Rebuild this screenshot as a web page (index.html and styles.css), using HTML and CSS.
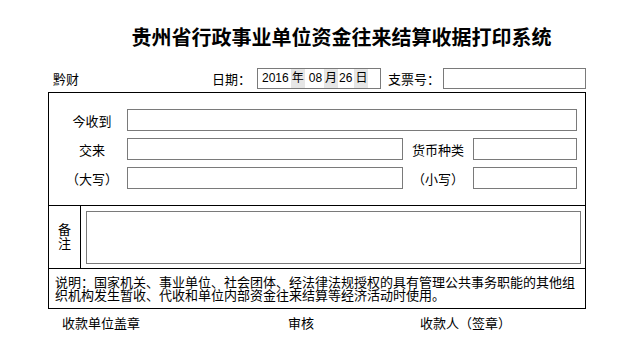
FILE: index.html
```html
<!DOCTYPE html>
<html lang="zh-CN">
<head>
    <meta charset="UTF-8">
    <title>贵州省行政事业单位资金往来结算收据打印系统</title>
    <link rel="stylesheet" href="styles.css">
</head>
<body>
    <h1 class="title">贵州省行政事业单位资金往来结算收据打印系统</h1>
    <div class="info-row">
        <span class="org">黔财</span>
        <span class="date-label">日期：</span>
        <div class="date-box">
            <span class="num">2016</span><span class="unit">年</span><span class="num">08</span><span class="unit">月</span><span class="num tight">26</span><span class="unit">日</span>
        </div>
        <span class="cheque-label">支票号：</span>
        <input type="text" class="field cheque">
    </div>
    <div class="receipt">
        <div class="fields">
            <label>今收到</label>
            <input type="text" class="field wide">
            <label>交来</label>
            <input type="text" class="field">
            <label>货币种类</label>
            <input type="text" class="field">
            <label>（大写）</label>
            <input type="text" class="field">
            <label>（小写）</label>
            <input type="text" class="field">
        </div>
        <div class="remark">
            <div class="remark-label"><span>备</span><span>注</span></div>
            <div class="remark-body">
                <textarea class="field note"></textarea>
            </div>
        </div>
        <div class="notice">说明：国家机关、事业单位、社会团体、经法律法规授权的具有管理公共事务职能的其他组织机构发生暂收、代收和单位内部资金往来结算等经济活动时使用。</div>
    </div>
    <div class="signs">
        <span>收款单位盖章</span>
        <span>审核</span>
        <span>收款人（签章）</span>
    </div>
</body>
</html>
```

FILE: styles.css
```css
body {
    margin: 0;
    padding: 0;
    background: #fff;
    color: #000;
    font-family: "Liberation Sans", "Noto Sans CJK SC", sans-serif;
    font-size: 13px;
}
.title {
    margin: 0;
    padding: 26px 0 0 50px;
    text-align: center;
    font-size: 20px;
    line-height: 24px;
    font-weight: bold;
}
.info-row {
    display: flex;
    align-items: center;
    height: 22px;
    margin: 17px 0 0 53px;
    width: 533px;
    white-space: nowrap;
}
.info-row > * {
    flex-shrink: 0;
}
.org {
    width: 159px;
}
.date-label {
    width: 45px;
}
.date-box {
    box-sizing: border-box;
    width: 124px;
    height: 21px;
    border: 1px solid #7a7a7a;
    display: flex;
    align-items: center;
    padding-left: 3px;
    font-size: 12px;
}
.date-box .num {
    padding: 0 2px 0 1px;
}
.date-box .tight {
    margin-left: -3px;
}
.date-box .unit {
    background: #e6e6e6;
    padding: 2px 1px;
    margin-right: 3px;
    line-height: 15px;
}
.cheque-label {
    margin-left: 7px;
    width: 55px;
}
.field {
    box-sizing: border-box;
    height: 22px;
    border: 1px solid #7a7a7a;
    margin: 0;
    padding: 0 3px;
    font-family: inherit;
    background: #fff;
}
.info-row .cheque {
    flex: 1 1 auto;
    width: 0;
    height: 21px;
}
.receipt {
    margin: 3px 0 0 48px;
    width: 538px;
    box-sizing: border-box;
    border: 1px solid #000;
}
.fields {
    display: grid;
    grid-template-columns: 70px 276px 70px 104px;
    row-gap: 7px;
    align-items: center;
    padding: 16px 8px 16px 8px;
    border-bottom: 1px solid #000;
}
.fields label {
    text-align: center;
}
.fields .wide {
    grid-column: 2 / 5;
}
.fields .field {
    width: 100%;
}
.remark {
    display: flex;
    border-bottom: 1px solid #000;
}
.remark-label {
    width: 31px;
    border-right: 1px solid #000;
    display: flex;
    flex-direction: column;
    align-items: center;
    justify-content: center;
}
.remark-label span {
    display: block;
    height: 14px;
    line-height: 14px;
}
.remark-body {
    flex: 1;
    padding: 5px 4px 4px 5px;
}
.note {
    display: block;
    width: 100%;
    height: 53px;
    resize: none;
}
.notice {
    padding: 7px 5px 6px 6px;
    line-height: 13px;
}
.signs {
    display: grid;
    grid-template-columns: 226px 132px auto;
    margin: 4px 0 0 62px;
}
```
